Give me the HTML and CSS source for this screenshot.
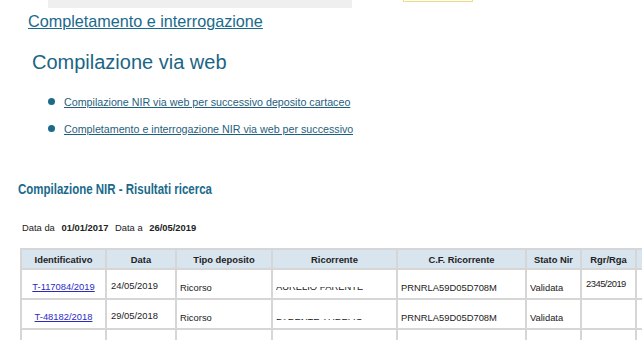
FILE: index.html
```html
<!DOCTYPE html>
<html lang="it">
<head>
<meta charset="utf-8">
<title>Compilazione NIR - Risultati ricerca</title>
<link rel="stylesheet" href="styles.css">
</head>
<body>
<div class="topstrip">
  <div class="greybar"></div>
  <div class="yellowbox"></div>
</div>

<a class="section-link" href="#">Completamento e interrogazione</a>

<h1 class="page-title">Compilazione via web</h1>

<ul class="menu">
  <li><a href="#">Compilazione NIR via web per successivo deposito cartaceo</a></li>
  <li><a href="#">Completamento e interrogazione NIR via web per successivo deposito telematico</a></li>
</ul>

<h2 class="results-title"><span>Compilazione NIR - Risultati ricerca</span></h2>

<p class="range">Data da <b>01/01/2017</b> Data a <b>26/05/2019</b></p>

<table class="results">
  <colgroup>
    <col class="c-id"><col class="c-data"><col class="c-tipo"><col class="c-ric">
    <col class="c-cf"><col class="c-stato"><col class="c-rgr"><col class="c-more">
  </colgroup>
  <tr class="head">
    <th>Identificativo</th>
    <th>Data</th>
    <th>Tipo deposito</th>
    <th>Ricorrente</th>
    <th>C.F. Ricorrente</th>
    <th>Stato Nir</th>
    <th>Rgr/Rga</th>
    <th></th>
  </tr>
  <tr class="row">
    <td class="center"><a href="#">T-117084/2019</a></td>
    <td>24/05/2019</td>
    <td class="low">Ricorso</td>
    <td class="low"><span class="cut cut-bottom"><span>AURELIO PARENTE</span></span></td>
    <td class="low">PRNRLA59D05D708M</td>
    <td class="low">Validata</td>
    <td class="top narrow">2345/2019</td>
    <td></td>
  </tr>
  <tr class="row">
    <td class="center"><a href="#">T-48182/2018</a></td>
    <td>29/05/2018</td>
    <td class="low">Ricorso</td>
    <td class="low"><span class="cut cut-top"><span>PARENTE AURELIO</span></span></td>
    <td class="low">PRNRLA59D05D708M</td>
    <td class="low">Validata</td>
    <td></td>
    <td></td>
  </tr>
  <tr class="partial">
    <td></td><td></td><td></td><td></td><td></td><td></td><td></td><td></td>
  </tr>
</table>
</body>
</html>
```

FILE: styles.css
```css
body {
  margin: 0;
  width: 642px;
  height: 354px;
  overflow: hidden;
  background: #fff;
  font-family: "Liberation Sans", Arial, sans-serif;
  color: #222;
}

/* strip left over from the page above */
.topstrip {display: flex; height: 8px;}
.greybar {margin-left: 48px; width: 304px; height: 8px; background: #efefef;}
.yellowbox {
  margin-left: 51px;
  width: 68px;
  height: 1px;
  border: 1px solid #eedc84;
  border-top: none;
}

.section-link {
  display: inline-block;
  margin: 4px 0 0 28px;
  font-size: 16.2px;
  color: #1a6a8c;
  text-decoration: underline;
}

.page-title {
  margin: 20px 0 0 32px;
  font-size: 20px;
  font-weight: normal;
  color: #1b6584;
}

.menu {
  list-style: none;
  margin: 14px 0 0 0;
  padding: 0 0 0 48px;
  width: 305px;
  overflow: hidden;
  white-space: nowrap;
}
.menu li {
  display: flex;
  align-items: center;
  height: 27px;
  font-size: 10.7px;
}
.menu li::before {
  content: "";
  flex: none;
  width: 7px;
  height: 7px;
  margin-right: 9px;
  border-radius: 50%;
  background: #1b6a8a;
}
.menu a {color: #1f5f7e; text-decoration: underline;}

.results-title {
  margin: 39px 0 0 18px;
  font-size: 14px;
  font-weight: bold;
  color: #1a6a8c;
}
/* the source uses a narrow face */
.results-title span {
  display: inline-block;
  transform: scaleX(0.82);
  transform-origin: left center;
  white-space: nowrap;
}

.range {
  margin: 25px 0 0 22px;
  font-size: 9.4px;
}
.range b {margin: 0 4px;}

.results {
  margin: 15px 0 0 20px;
  border-collapse: collapse;
  table-layout: fixed;
  width: 680px;
  font-size: 9.4px;
}
.c-id {width: 85px;}
.c-data {width: 70px;}
.c-tipo {width: 96px;}
.c-ric {width: 125px;}
.c-cf {width: 129px;}
.c-stato {width: 55px;}
.c-rgr {width: 55px;}
.c-more {width: 65px;}

.results th, .results td {
  border: 2px solid #d6d6d6;
  padding: 0 4px;
  text-align: left;
  white-space: nowrap;
  overflow: hidden;
}
.results tr.head {height: 20px;}
.results tr.row {height: 30px;}
.results .head th {
  background: #d8e4ee;
  text-align: center;
  font-weight: bold;
  color: #222;
}
.results td {padding-top: 3px;}
.results td.center {text-align: center; padding-top: 5px;}
.results td.low {padding-top: 7px; padding-left: 3px;}
.results td.top {vertical-align: top; padding-top: 8px;}
.results td.narrow {letter-spacing: -0.5px;}
.results a {color: #2b2bc4; text-decoration: underline;}

.results tr.partial {height: 11px;}
.results .partial td {border-bottom: none;}

/* names are only partly shown in the source */
.cut {display: inline-block; overflow: hidden; vertical-align: middle;}
.cut > span {display: block; line-height: 11px;}
.cut-bottom {height: 4px;}
.cut-bottom > span {margin-top: -6px;}
.cut-top {height: 3px;}
.cut-top > span {margin-top: -1px;}
```
